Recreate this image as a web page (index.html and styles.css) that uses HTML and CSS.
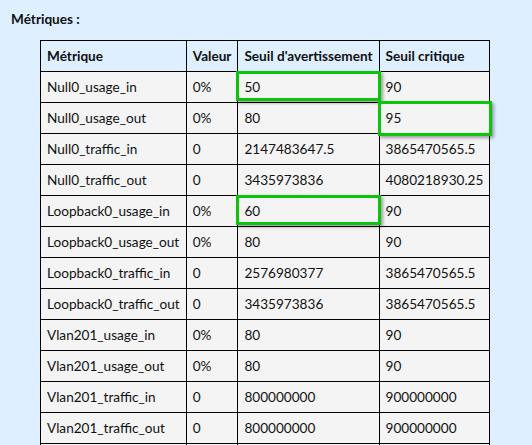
FILE: index.html
```html
<!DOCTYPE html>
<html lang="fr">
<head>
<meta charset="utf-8">
<title>Métriques</title>
<link rel="stylesheet" href="styles.css">
</head>
<body>
<div class="section">
  <div class="title">Métriques :</div>
  <table class="metrics">
    <thead>
      <tr><th>Métrique</th><th>Valeur</th><th>Seuil d'avertissement</th><th>Seuil critique</th></tr>
    </thead>
    <tbody>
      <tr><td>Null0_usage_in</td><td>0%</td><td class="hl hl-a">50</td><td>90</td></tr>
      <tr><td>Null0_usage_out</td><td>0%</td><td>80</td><td class="hl hl-b">95</td></tr>
      <tr><td>Null0_traffic_in</td><td>0</td><td>2147483647.5</td><td>3865470565.5</td></tr>
      <tr><td>Null0_traffic_out</td><td>0</td><td>3435973836</td><td>4080218930.25</td></tr>
      <tr><td>Loopback0_usage_in</td><td>0%</td><td class="hl hl-a">60</td><td>90</td></tr>
      <tr><td>Loopback0_usage_out</td><td>0%</td><td>80</td><td>90</td></tr>
      <tr><td>Loopback0_traffic_in</td><td>0</td><td>2576980377</td><td>3865470565.5</td></tr>
      <tr><td>Loopback0_traffic_out</td><td>0</td><td>3435973836</td><td>3865470565.5</td></tr>
      <tr><td>Vlan201_usage_in</td><td>0%</td><td>80</td><td>90</td></tr>
      <tr><td>Vlan201_usage_out</td><td>0%</td><td>80</td><td>90</td></tr>
      <tr><td>Vlan201_traffic_in</td><td>0</td><td>800000000</td><td>900000000</td></tr>
      <tr><td>Vlan201_traffic_out</td><td>0</td><td>800000000</td><td>900000000</td></tr>
      <tr class="last"><td>&nbsp;</td><td>&nbsp;</td><td>&nbsp;</td><td>&nbsp;</td></tr>
    </tbody>
  </table>
</div>
</body>
</html>
```
FILE: styles.css
```css
html, body {
  margin: 0;
  padding: 0;
  background: #deefff;
}
body {
  font-family: Lato, "Open Sans", sans-serif;
  font-size: 13.6px;
  color: #111;
}
.section {
  padding: 11px 0 0 11px;
}
.title {
  font-weight: bold;
  font-size: 13.6px;
  line-height: 17px;
  margin-bottom: 12px;
}
.metrics {
  border-collapse: collapse;
  margin-left: 29px;
}
.metrics th,
.metrics td {
  border: 1px solid #000;
  padding: 7px 6px;
  line-height: 16px;
  text-align: left;
  white-space: nowrap;
}
.metrics th {
  background: #deefff;
  font-weight: bold;
}
.metrics td {
  background: #f4f4f4;
}
.hl {
  position: relative;
}
.hl::after {
  content: "";
  position: absolute;
  border: 3px solid #0cc40c;
  box-shadow: 2px 2px 3px rgba(0, 0, 0, 0.35);
  pointer-events: none;
}
.hl-a::after {
  left: -2px;
  top: -1px;
  right: -2px;
  bottom: 1px;
}
.hl-b::after {
  left: -2px;
  top: -2px;
  right: -3px;
  bottom: -3px;
}
```
